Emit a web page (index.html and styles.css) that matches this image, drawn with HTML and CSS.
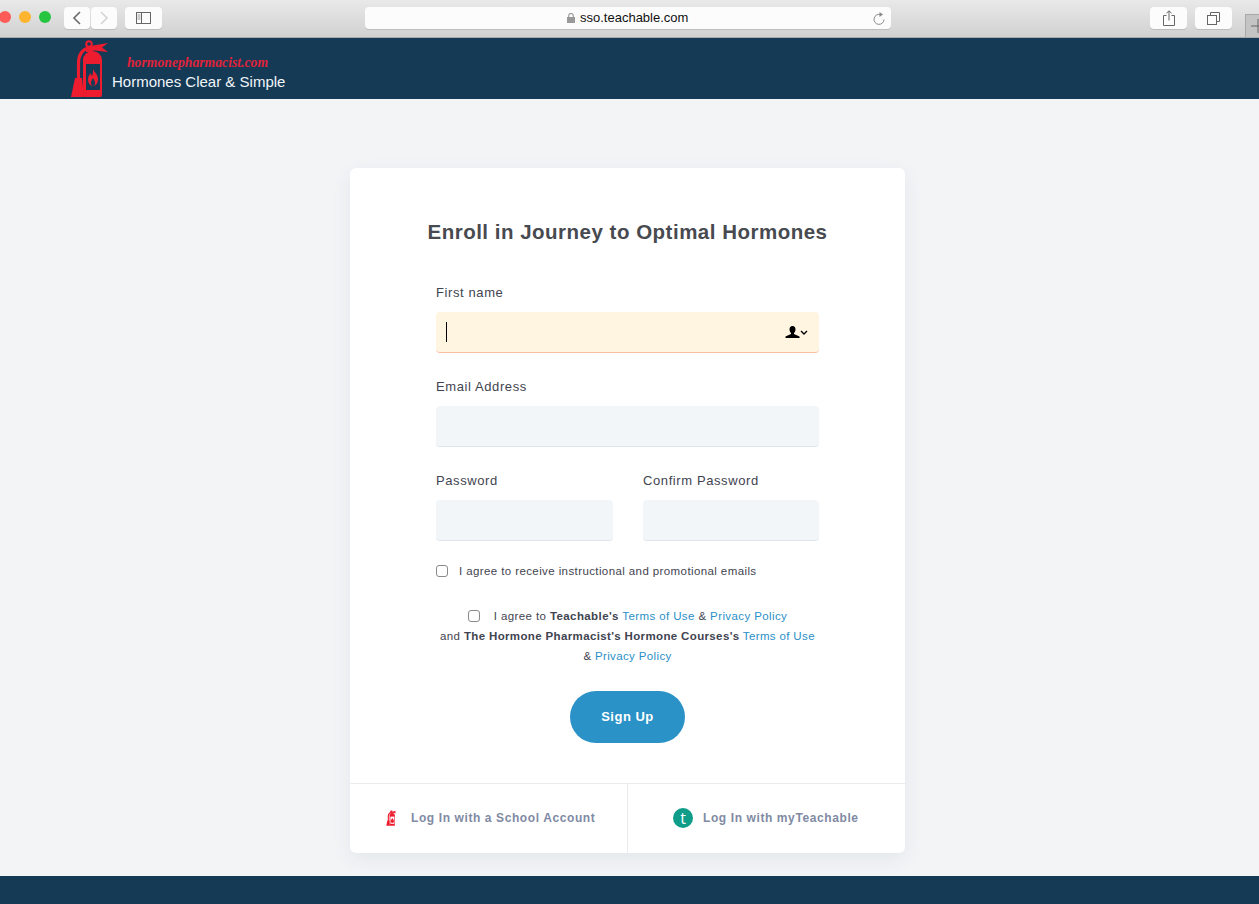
FILE: index.html
```html
<!DOCTYPE html>
<html lang="en">
<head>
    <meta charset="UTF-8">
    <meta name="viewport" content="width=device-width, initial-scale=1.0">
    <title>Enroll in Journey to Optimal Hormones</title>
    <link rel="stylesheet" href="styles.css">
</head>
<body>
    <div class="toolbar">
        <div class="lights">
            <span class="light red"></span>
            <span class="light yellow"></span>
            <span class="light green"></span>
        </div>
        <div class="nav-group">
            <div class="tool-btn nav-btn">
                <svg width="12" height="16" viewBox="0 0 12 16"><path d="M9 2 3 8l6 6" fill="none" stroke="#6a6a6a" stroke-width="1.6"/></svg>
            </div>
            <div class="tool-btn nav-btn">
                <svg width="12" height="16" viewBox="0 0 12 16"><path d="M3 2l6 6-6 6" fill="none" stroke="#d4d4d4" stroke-width="1.6"/></svg>
            </div>
        </div>
        <div class="tool-btn side-btn">
            <svg width="15" height="12" viewBox="0 0 15 12"><rect x=".5" y=".5" width="14" height="11" fill="none" stroke="#666"/><path d="M5.500 .5v11" stroke="#666"/><path d="M1.500 3h3M1.500 5h3M1.500 7h3" stroke="#999"/></svg>
        </div>
        <div class="url-bar">
            <div class="url-text">
                <svg width="8" height="10" viewBox="0 0 8 10"><rect y="4" width="8" height="6" fill="#999"/><path d="M1.700 4.500V2.800a2.300 2.300 0 0 1 4.600 0v1.700" fill="none" stroke="#999" stroke-width="1.100"/></svg>
                <span>sso.teachable.com</span>
            </div>
            <svg class="reload" width="12" height="13" viewBox="0 0 12 13"><path d="M7.500 2.600A5 5 0 1 0 11 7.500" fill="none" stroke="#888" stroke-width="1"/><path d="M6.500 0v5L10 2.500z" fill="#888"/></svg>
        </div>
        <div class="tool-btn share-btn">
            <svg width="12" height="16" viewBox="0 0 12 16"><path d="M3.500 5.500H.5v10h11v-10h-3" fill="none" stroke="#666"/><path d="M6 10.500V1M3.500 3.200 6 .8l2.500 2.400" fill="none" stroke="#666"/></svg>
        </div>
        <div class="tool-btn tabs-btn">
            <svg width="13" height="13" viewBox="0 0 13 13"><rect x=".5" y="3.500" width="9" height="9" fill="none" stroke="#666"/><path d="M3.500 3.500v-3h9v9h-3" fill="none" stroke="#666"/></svg>
        </div>
        <div class="new-tab">
            <svg width="14" height="14" viewBox="0 0 14 14"><path d="M7 0v14M0 7h14" stroke="#666"/></svg>
        </div>
    </div>

    <header class="site-header">
        <svg class="logo" width="38" height="58" viewBox="0 0 38 58">
            <circle cx="18" cy="4" r="2.800" fill="none" stroke="#ed1c2e" stroke-width="2"/>
            <path d="M15 6h7v6h-7z" fill="#ed1c2e"/>
            <path d="M19 6 37 3l-6 4.500L37 12 19 10z" fill="#ed1c2e"/>
            <path d="M12 20a9.500 9 0 0 1 19 0v35a2 2 0 0 1-2 2H14a2 2 0 0 1-2-2z" fill="#ed1c2e"/>
            <path d="M17 8C10 10 7.500 15 7.500 24v17" fill="none" stroke="#ed1c2e" stroke-width="3.200"/>
            <path d="M4 38h7l2 19H0z" fill="#ed1c2e"/>
            <rect x="15" y="24" width="14" height="26" fill="#143a56"/>
            <path d="M22 29c1 3 5 5 5 10 0 4-2 7-5 7s-5-3-5-7c0-3 2-4 2-6 1 1 1 2 2 3 1-2 1-4 1-7z" fill="#ed1c2e"/>
            <path d="M22 38c1 2 2 3 2 5s-1 3-2 3-2-1-2-3 1-3 2-5z" fill="#143a56"/>
        </svg>
        <div class="brand">
            <div class="brand-script">hormonepharmacist.com</div>
            <div class="brand-tag">Hormones Clear &amp; Simple</div>
        </div>
    </header>

    <main class="page">
        <div class="card">
            <form class="card-body">
                <h1>Enroll in Journey to Optimal Hormones</h1>

                <div class="form-group">
                    <label for="name">First name</label>
                    <div class="field-wrap">
                        <input type="text" id="name" class="field field-active">
                        <span class="caret"></span>
                        <svg class="autofill" width="24" height="12" viewBox="0 0 24 12">
                            <path d="M7.500 0C5.500 0 4.500 1.500 4.500 3.500c0 2 1 3 1.500 3.500v1L.5 10.500V12h14v-1.500L9 8V7c.5-.5 1.500-1.500 1.500-3.500S9.500 0 7.500 0z" fill="#000"/>
                            <path d="M16 5l3 3 3-3" fill="none" stroke="#000" stroke-width="1.400"/>
                        </svg>
                    </div>
                </div>

                <div class="form-group">
                    <label for="email">Email Address</label>
                    <input type="email" id="email" class="field">
                </div>

                <div class="form-row">
                    <div>
                        <label for="password">Password</label>
                        <input type="password" id="password" class="field">
                    </div>
                    <div>
                        <label for="confirm">Confirm Password</label>
                        <input type="password" id="confirm" class="field">
                    </div>
                </div>

                <div class="check-row">
                    <input type="checkbox" class="check">
                    <span>I agree to receive instructional and promotional emails</span>
                </div>

                <div class="terms">
                    <input type="checkbox" class="check"><span class="terms-first">I agree to <b>Teachable's</b> <a href="#">Terms of Use</a> &amp; <a href="#">Privacy Policy</a></span><br>
                    and <b>The Hormone Pharmacist's Hormone Courses's</b> <a href="#">Terms of Use</a><br>
                    &amp; <a href="#">Privacy Policy</a>
                </div>

                <button type="submit" class="signup">Sign Up</button>
            </form>

            <div class="card-footer">
                <a href="#" class="foot-link foot-school">
                    <svg width="11" height="16" viewBox="0 0 38 58">
                        <path d="M15 2h7v10h-7z" fill="#ed1c2e"/>
                        <path d="M19 6 37 3l-6 4.500L37 12 19 10z" fill="#ed1c2e"/>
                        <path d="M12 20a9.500 9 0 0 1 19 0v35a2 2 0 0 1-2 2H14a2 2 0 0 1-2-2z" fill="#ed1c2e"/>
                        <path d="M17 8C10 10 7.500 15 7.500 24v17" fill="none" stroke="#ed1c2e" stroke-width="4"/>
                        <path d="M4 38h7l2 19H0z" fill="#ed1c2e"/>
                        <rect x="15" y="24" width="14" height="26" fill="#fff"/>
                        <path d="M22 29c4 5 6 8 6 12 0 4-3 6-6 6s-6-2-6-6c0-4 3-7 6-12z" fill="#ed1c2e"/>
                    </svg>
                    <span>Log In with a School Account</span>
                </a>
                <a href="#" class="foot-link foot-teach">
                    <span class="t-badge">t</span>
                    <span>Log In with myTeachable</span>
                </a>
            </div>
        </div>
    </main>

    <footer class="site-footer"></footer>
</body>
</html>
```

FILE: styles.css
```css
* {
    box-sizing: border-box;
}
html, body {
    height: 904px;
    overflow: hidden;
}
body {
    margin: 0;
    display: flex;
    flex-direction: column;
    font-family: "Liberation Sans", Arial, sans-serif;
    background-color: #f3f4f6;
    color: #3f4450;
}

/* browser chrome */
.toolbar {
    height: 38px;
    flex: none;
    display: flex;
    align-items: flex-start;
    padding-top: 7px;
    background: linear-gradient(#e9e9e9, #d1d1d1);
    border-bottom: 1px solid #a9a9a9;
    overflow: hidden;
}
.toolbar > div {
    flex: none;
}
.lights {
    display: flex;
    gap: 8px;
    margin: 4px 0 0 -1px;
}
.light {
    width: 12px;
    height: 12px;
    border-radius: 50%;
}
.red { background: #fc5b57; }
.yellow { background: #fdb52f; }
.green { background: #27c53f; }
.tool-btn {
    height: 22px;
    display: flex;
    align-items: center;
    justify-content: center;
    background: #fcfcfc;
    border-radius: 4px;
    box-shadow: 0 1px 0 #bdbdbd;
}
.nav-group {
    display: flex;
    gap: 1px;
    margin-left: 13px;
}
.nav-btn { width: 26px; }
.side-btn { width: 37px; margin-left: 8px; }
.url-bar {
    width: 526px;
    height: 22px;
    margin-left: 203px;
    padding: 0 6px 0 0;
    display: flex;
    align-items: center;
    justify-content: flex-end;
    position: relative;
    background: #fcfcfc;
    border-radius: 4px;
    box-shadow: 0 1px 0 #bdbdbd;
}
.url-text {
    position: absolute;
    left: 202px;
    top: 4px;
    display: flex;
    align-items: center;
    gap: 5px;
    font-size: 13px;
    line-height: 14px;
    color: #111;
}
.share-btn { width: 37px; margin-left: 259px; }
.tabs-btn { width: 37px; margin-left: 8px; }
.new-tab {
    width: 30px;
    height: 24px;
    margin: 7px 0 0 13px;
    padding: 4px 0 0 5px;
    background: #c4c4c4;
    border: 1px solid #a9a9a9;
}

/* site header */
.site-header {
    height: 61px;
    flex: none;
    display: flex;
    background: #143a56;
    padding: 2px 0 0 71px;
}
.logo {
    flex: none;
}
.brand {
    margin-left: 3px;
}
.brand-script {
    margin: 14px 0 0 15px;
    font-family: "Liberation Serif", serif;
    font-style: italic;
    font-weight: bold;
    font-size: 13.700px;
    line-height: 18px;
    color: #e0233a;
}
.brand-tag {
    margin-top: 1px;
    font-size: 15px;
    line-height: 18px;
    color: #f2f5f8;
}

/* card */
.page {
    flex: 1;
    padding: 69px 0 0 350px;
}
.card {
    width: 555px;
    height: 685px;
    background: #fff;
    border-radius: 6px;
    box-shadow: 0 6px 20px rgba(20,58,86,0.07);
}
.card-body {
    height: 615px;
    padding: 50px 86px 0;
    text-align: center;
}
h1 {
    margin: 0 -20px 38px;
    font-size: 20.500px;
    line-height: 28px;
    letter-spacing: 0.5px;
    color: #474a4f;
    white-space: nowrap;
}
label {
    display: block;
    padding-top: 1px;
    margin-bottom: 11px;
    font-size: 13px;
    line-height: 16px;
    letter-spacing: 0.6px;
    text-align: left;
}
.form-group {
    margin-bottom: 25px;
}
.field-wrap {
    position: relative;
}
.field {
    display: block;
    width: 100%;
    height: 41px;
    padding: 0 10px;
    background: #f2f6f9;
    border: none;
    border-bottom: 1px solid #dfe5ea;
    border-radius: 4px;
    outline: none;
}
.field-active {
    background: #fff5e0;
    border-bottom-color: #fbbfa5;
}
.caret {
    position: absolute;
    left: 10px;
    top: 10px;
    width: 1px;
    height: 20px;
    background: #000;
}
.autofill {
    position: absolute;
    right: 10px;
    top: 14px;
}
.form-row {
    display: grid;
    grid-template-columns: 177px 176px;
    gap: 30px;
    margin-bottom: 20px;
}
.check-row {
    display: flex;
    align-items: center;
    gap: 11px;
    height: 20px;
    margin-bottom: 25px;
    font-size: 11.500px;
    letter-spacing: 0.4px;
    text-align: left;
    white-space: nowrap;
}
.check {
    appearance: none;
    flex: none;
    width: 12px;
    height: 12px;
    margin: 0;
    background: #fff;
    border: 1px solid #8a8a8a;
    border-radius: 3px;
}
.terms {
    height: 60px;
    margin: 0 -4px 25px;
    font-size: 11.500px;
    line-height: 20px;
    letter-spacing: 0.36px;
    white-space: nowrap;
}
.terms .check {
    display: inline-block;
    vertical-align: -2px;
}
.terms-first {
    margin-left: 14px;
    letter-spacing: 0.4px;
}
.terms a {
    color: #2a8fc7;
    text-decoration: none;
}
.signup {
    width: 115px;
    height: 52px;
    padding: 0 0 2px;
    background: #2a92c6;
    color: #fff;
    border: none;
    border-radius: 26px;
    font-family: inherit;
    font-size: 13px;
    font-weight: bold;
    letter-spacing: 0.5px;
}
.card-footer {
    height: 70px;
    display: grid;
    grid-template-columns: 278px 277px;
    padding-bottom: 2px;
    border-top: 1px solid #e9ebee;
}
.foot-link {
    display: flex;
    align-items: center;
    font-size: 12px;
    font-weight: bold;
    letter-spacing: 0.6px;
    color: #7f8aa3;
    text-decoration: none;
}
.foot-school {
    padding-left: 36px;
    gap: 14px;
    margin-bottom: -2px;
    padding-bottom: 2px;
    border-right: 1px solid #e9ebee;
}
.foot-teach {
    padding-left: 45px;
    gap: 10px;
}
.t-badge {
    width: 20px;
    height: 20px;
    border-radius: 50%;
    background: #0f9d8a;
    color: #fff;
    font-family: "Open Sans", sans-serif;
    font-size: 16px;
    font-weight: normal;
    line-height: 20px;
    text-align: center;
    letter-spacing: 0;
}

.site-footer {
    height: 28px;
    flex: none;
    background: #143a56;
}
```
